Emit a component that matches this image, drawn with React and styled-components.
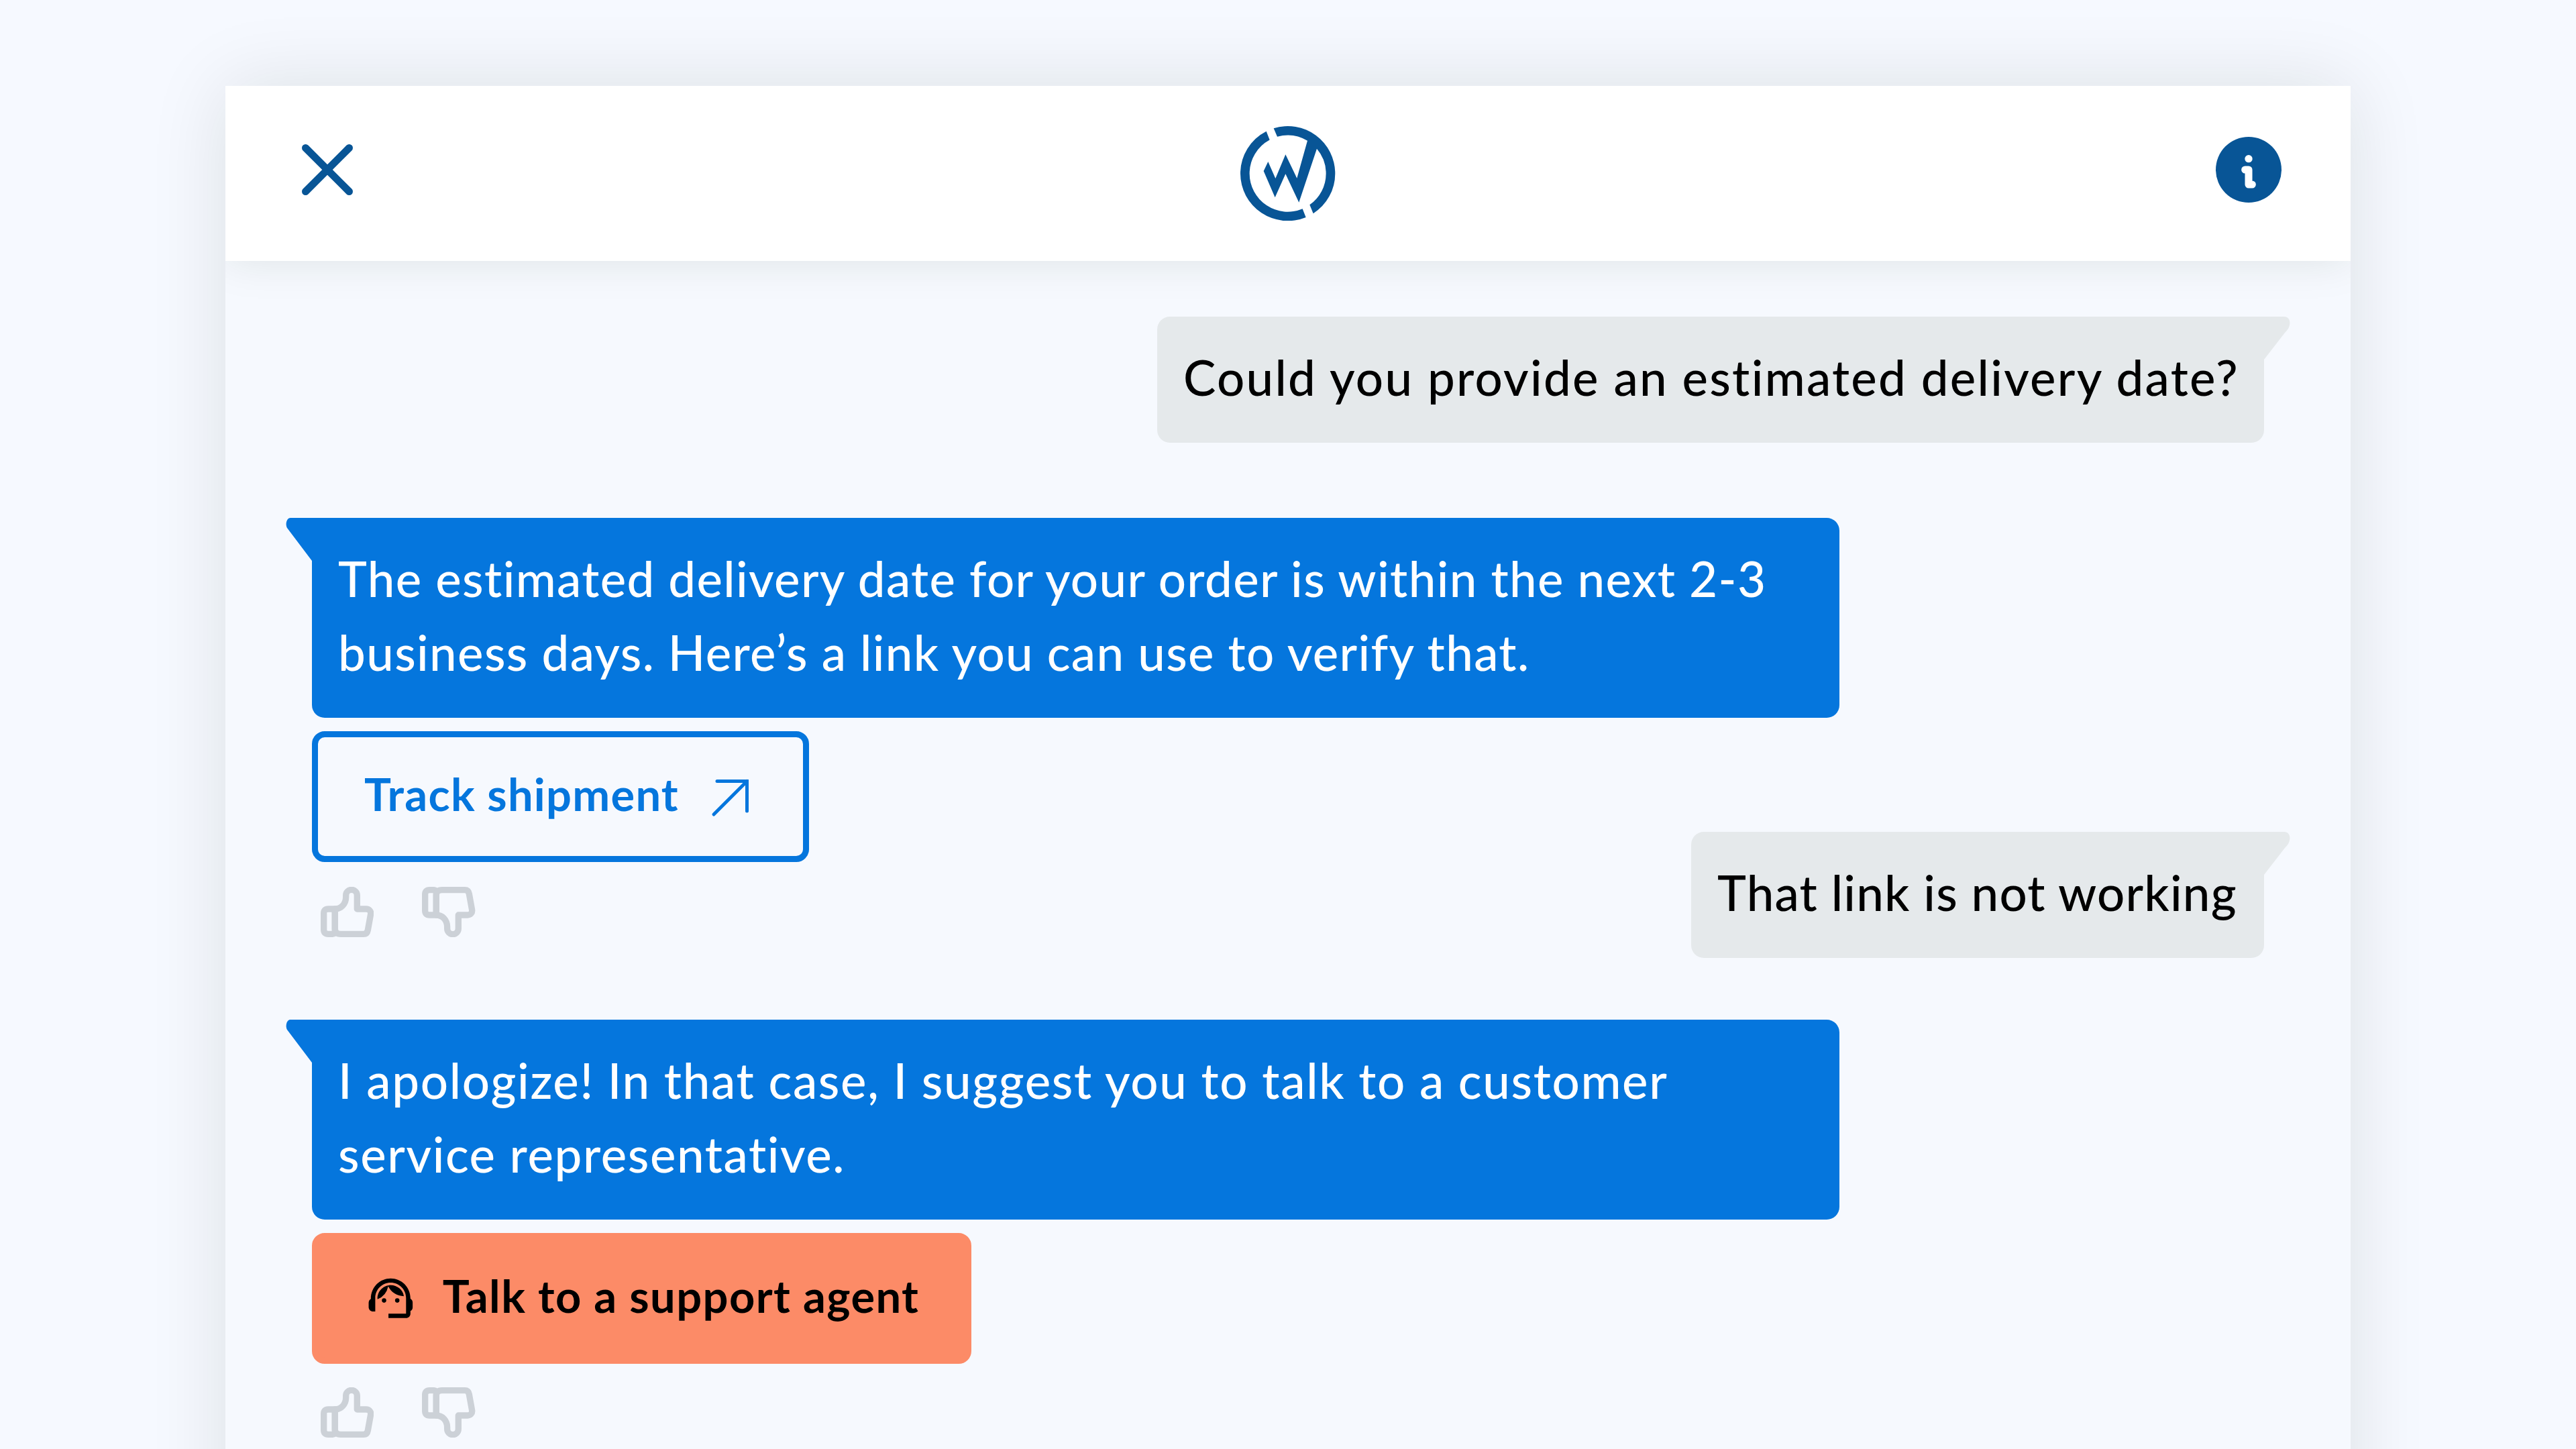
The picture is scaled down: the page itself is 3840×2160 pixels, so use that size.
import React from 'react';
import styled, { createGlobalStyle } from 'styled-components';
import { MdSupportAgent } from 'react-icons/md';

const CloseIcon = () => (
  <svg width="76" height="76" viewBox="0 0 76 76" fill="none">
    <path d="M5.5 5.5L70.5 70.5M70.5 5.5L5.5 70.5" stroke="currentColor" strokeWidth="11" strokeLinecap="round" />
  </svg>
);

const Logo = () => (
  <svg width="141.3" height="141.3" viewBox="88 83 424 424" fill="currentColor">
    <path d="M204 106.3A212 212 0 0 0 88 295A212 212 0 0 0 381 490.8L366 452.8A171 171 0 0 1 129 295A171 171 0 0 1 219 144.6Z" />
    <path d="M237 92.6A212 212 0 0 1 512 295A212 212 0 0 1 414 473.6L398 435A171 171 0 0 0 471 295A171 171 0 0 0 430 184.3L350 424L290 297L243 402L192 284L212 242L245 317L290 210L341 316L388 148.4A171 171 0 0 0 253 130.6Z" />
  </svg>
);

const InfoIcon = () => (
  <svg width="98" height="98" viewBox="0 0 294 294">
    <circle cx="147" cy="147" r="147" fill="currentColor" />
    <circle cx="147" cy="98" r="17" fill="#fff" />
    <path d="M131 147H147V213H163" fill="none" stroke="#fff" strokeWidth="33" strokeLinecap="round" strokeLinejoin="round" />
  </svg>
);

const ArrowIcon = () => (
  <svg width="78" height="78" viewBox="0 0 78 78" fill="none">
    <path
      d="M19 15.5H63.5V60M63.5 15.5L14 65"
      stroke="currentColor"
      strokeWidth="5"
      strokeLinecap="round"
      strokeLinejoin="miter"
    />
  </svg>
);

const ThumbIcon = ({ down }) => (
  <svg width="79.3" height="75" viewBox="0 0 238 225" fill="none">
    <g
      transform={down ? 'translate(0 225) scale(1 -1)' : undefined}
      stroke="currentColor"
      strokeWidth="28"
      strokeLinejoin="round"
    >
      <path d="M64 99H34Q14 99 14 119V191Q14 211 34 211H54Q64 211 64 199Z" />
      <path d="M64 99C92 99 113 76 113 46V38A25 25 0 0 1 163 38V99H204C217 99 226 109 224 122L211 194Q208 211 192 211H90Q64 211 64 187Z" />
    </g>
  </svg>
);

const UserTail = () => (
  <svg width="40" height="66" viewBox="0 0 40 66" fill="currentColor">
    <path d="M0 0H31C39 0 42 9 37 18Q35 21 32 24L1 64V66H0Z" />
  </svg>
);

const BotTail = () => (
  <svg width="40" height="66" viewBox="0 0 40 66" fill="currentColor">
    <path d="M40 0H7C1 0 -1 10 2 15L39 64V66H40Z" />
  </svg>
);

const Feedback = ({ gap }) => (
  <FeedbackRow $gap={gap}>
    <ThumbIcon />
    <ThumbIcon down />
  </FeedbackRow>
);

const App = () => {
  return (
    <Page>
      <GlobalStyle />
      <Panel>
        <Header>
          <HeaderSide>
            <CloseIcon />
          </HeaderSide>
          <Logo />
          <HeaderSide $end>
            <InfoIcon />
          </HeaderSide>
        </Header>
        <Messages>
          <UserBubble $width={1650}>
            <Line $tracking={2.29}>Could you provide an estimated delivery date?</Line>
            <Tail $side="right">
              <UserTail />
            </Tail>
          </UserBubble>

          <BotGroup $top={112}>
            <BotBubble>
              <Line $tracking={1.37}>The estimated delivery date for your order is within the next 2-3</Line>
              <Line $tracking={1.38}>business days. Here’s a link you can use to verify that.</Line>
              <Tail $side="left">
                <BotTail />
              </Tail>
            </BotBubble>
            <ActionButton $outlined>
              <Label $tracking={1.25}>Track shipment</Label>
              <ArrowIcon />
            </ActionButton>
            <Feedback gap={37} />
          </BotGroup>

          <UserBubble $width={854} $top={-157}>
            <Line $tracking={1.25}>That link is not working</Line>
            <Tail $side="right">
              <UserTail />
            </Tail>
          </UserBubble>

          <BotGroup $top={92}>
            <BotBubble>
              <Line $tracking={1.67}>I apologize! In that case, I suggest you to talk to a customer</Line>
              <Line $tracking={1.6}>service representative.</Line>
              <Tail $side="left">
                <BotTail />
              </Tail>
            </BotBubble>
            <ActionButton>
              <MdSupportAgent size={78.7} />
              <Label $tracking={1.42}>Talk to a support agent</Label>
            </ActionButton>
            <Feedback gap={35} />
          </BotGroup>
        </Messages>
      </Panel>
    </Page>
  );
};

const GlobalStyle = createGlobalStyle`
  body {
    margin: 0;
    background: #f6f9ff;
    font-family: Lato, 'Open Sans', sans-serif;
  }
`;

const Page = styled.div`
  box-sizing: border-box;
  display: flex;
  justify-content: center;
  height: 2160px;
  padding-top: 128px;
  overflow: hidden;
`;

const Panel = styled.div`
  width: 3168px;
  height: 2160px;
  flex-shrink: 0;
  overflow: hidden;
  background: #f6f9fe;
  box-shadow: 0 0 110px rgba(20, 30, 20, 0.11);
`;

const Header = styled.div`
  box-sizing: border-box;
  display: grid;
  grid-template-columns: 1fr auto 1fr;
  align-items: center;
  height: 261px;
  padding: 0 103px 0 114px;
  background: #fff;
  color: #085596;
  box-shadow: 0 0 60px rgba(20, 40, 20, 0.1);

  > svg {
    margin-left: -11px;
  }
`;

const HeaderSide = styled.div`
  display: flex;
  justify-content: ${({ $end }) => ($end ? 'flex-end' : 'flex-start')};
  padding-bottom: 11px;
`;

const Messages = styled.div`
  display: flex;
  flex-direction: column;
  padding: 83px 129px 0;
`;

const Bubble = styled.div`
  position: relative;
  box-sizing: border-box;
  padding: 35px 0 43px 39px;
  font-size: 72.6px;
  font-weight: 500;
  line-height: 110px;
  white-space: nowrap;
`;

const UserBubble = styled(Bubble)`
  align-self: flex-end;
  width: ${({ $width }) => $width}px;
  margin-top: ${({ $top }) => $top || 0}px;
  border-radius: 19px 0 19px 19px;
  background: #e5e9eb;
  color: #000;
`;

const BotBubble = styled(Bubble)`
  width: 2277px;
  border-radius: 0 19px 19px 19px;
  background: #0576dd;
  color: #fff;
`;

const Line = styled.div`
  letter-spacing: ${({ $tracking }) => $tracking}px;
`;

// 말풍선 꼬리
const Tail = styled.div`
  position: absolute;
  top: 0;
  ${({ $side }) => $side}: -39px;
  display: flex;
  color: ${({ $side }) => ($side === 'left' ? '#0576dd' : '#e5e9eb')};
`;

const BotGroup = styled.div`
  display: flex;
  flex-direction: column;
  align-items: flex-start;
  margin-top: ${({ $top }) => $top}px;
`;

const ActionButton = styled.button`
  display: flex;
  align-items: center;
  gap: 38px;
  box-sizing: border-box;
  height: 195px;
  margin: 20px 0 0;
  padding: 0 69px;
  border: 9px solid ${({ $outlined }) => ($outlined ? '#0576dd' : '#fc8b67')};
  border-radius: 19px;
  background: ${({ $outlined }) => ($outlined ? 'transparent' : '#fc8b67')};
  color: ${({ $outlined }) => ($outlined ? '#0576dd' : '#000')};
  font-family: inherit;
`;

const Label = styled.span`
  padding-bottom: 9px;
  font-size: 66.8px;
  font-weight: 700;
  line-height: 80px;
  letter-spacing: ${({ $tracking }) => $tracking}px;
  white-space: nowrap;
`;

const FeedbackRow = styled.div`
  display: flex;
  gap: 72px;
  height: 75px;
  margin: ${({ $gap }) => $gap}px 0 0 13px;
  color: #ccd1d7;
`;

export default App;
